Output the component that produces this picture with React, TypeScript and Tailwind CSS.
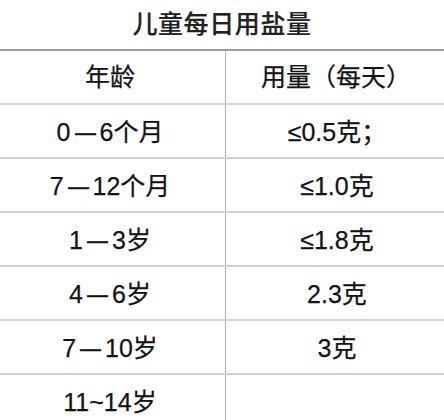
const rows: [string, string, string][] = [
  ["0", "6个月", "≤0.5克；"],
  ["7", "12个月", "≤1.0克"],
  ["1", "3岁", "≤1.8克"],
  ["4", "6岁", "2.3克"],
  ["7", "10岁", "3克"],
];

function Dash() {
  return <span className="inline-block mx-[2px] scale-x-[0.84]">—</span>;
}

export default function App() {
  return (
    <div className="w-[444px] h-[420px] overflow-hidden bg-white text-[#131313] font-['Liberation_Sans','Noto_Sans_CJK_SC',sans-serif] [-webkit-text-stroke:0.25px_#131313]">
      <div className="h-[49px] flex items-center justify-center text-[25px] font-medium text-[#222] tracking-[0.6px] [-webkit-text-stroke:0.2px_#222]">
        儿童每日用盐量
      </div>
      <div className="border-t-2 border-[#9c9c9c]">
        <div className="grid grid-cols-[226px_1fr] border-b-2 border-[#d2d2d2]">
          <div className="h-[52px] flex items-center justify-center pt-[2px] pr-[5px] border-r border-[#b0b0b0] text-[25px]">
            年龄
          </div>
          <div className="h-[52px] flex items-center justify-center pt-[2px] pl-[2px] text-[25px]">
            用量（每天）
          </div>
        </div>
        {rows.map(([from, to, amount]) => (
          <div key={from + to} className="grid grid-cols-[226px_1fr] border-b-2 border-[#d2d2d2]">
            <div className="h-[52px] flex items-center justify-center pt-[4px] pr-[5px] border-r border-[#b0b0b0] text-[25px]">
              <span>
                {from}
                <Dash />
                {to}
              </span>
            </div>
            <div className="h-[52px] flex items-center justify-center pt-[4px] pl-[4px] text-[25px]">
              {amount}
            </div>
          </div>
        ))}
        <div className="grid grid-cols-[226px_1fr] border-b-2 border-[#d2d2d2]">
          <div className="h-[52px] flex items-center justify-center pt-[4px] pr-[5px] border-r border-[#b0b0b0] text-[25px]">
            11~14岁
          </div>
          <div className="h-[52px]" />
        </div>
      </div>
    </div>
  );
}
